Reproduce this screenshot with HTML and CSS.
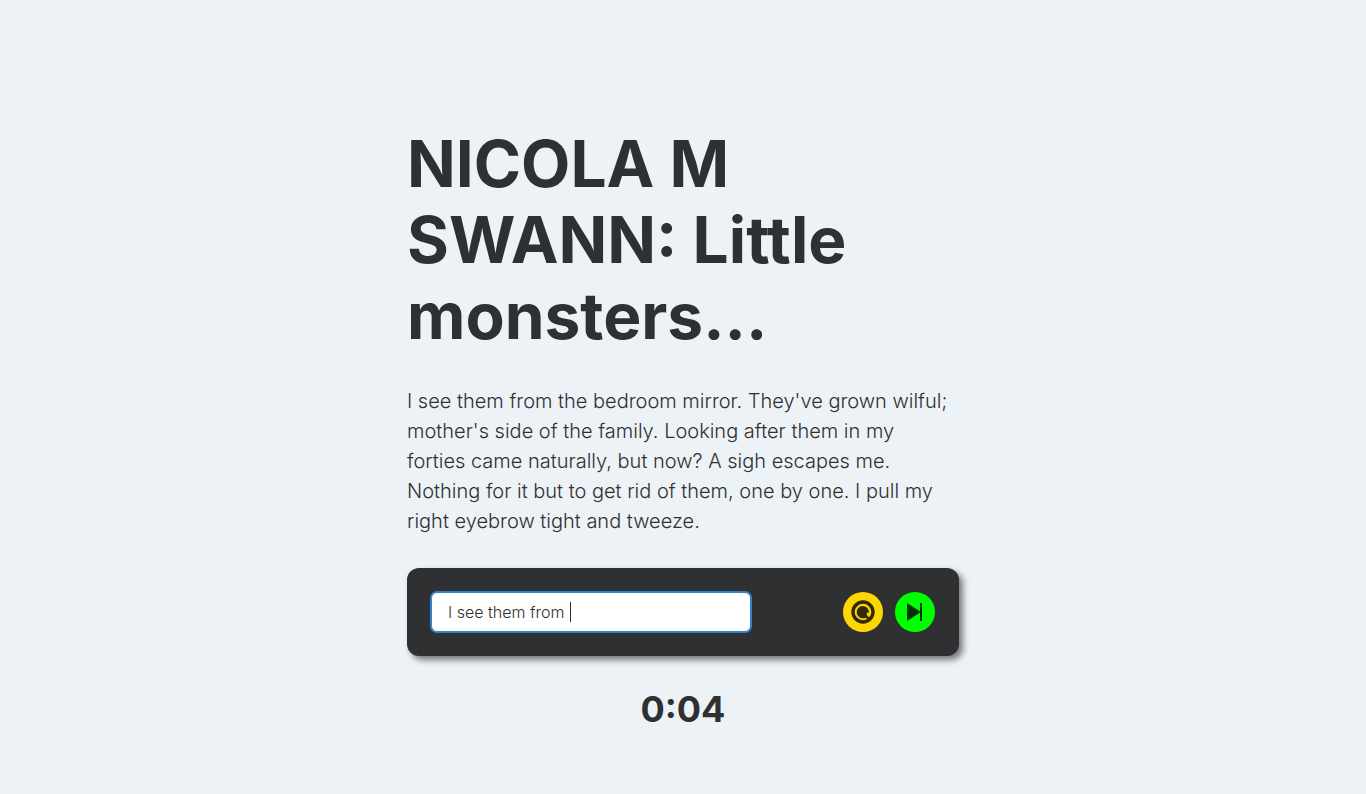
FILE: index.html
```html
<!DOCTYPE html>
<html lang="en">
<head>
<meta charset="utf-8">
<title>Typing practice</title>
<link rel="stylesheet" href="styles.css">
</head>
<body>
<main class="page">
  <h1 class="title">NICOLA M SWANN: Little monsters...</h1>
  <p class="passage">I see them from the bedroom mirror. They've grown wilful; mother's side of the family. Looking after them in my forties came naturally, but now? A sigh escapes me. Nothing for it but to get rid of them, one by one. I pull my right eyebrow tight and tweeze.</p>
  <form class="panel">
    <div class="field">
      <input class="entry" type="text" aria-label="Type the passage" autocomplete="off" spellcheck="false" value="I see them from " autofocus>
      <span class="caret" aria-hidden="true"></span>
    </div>
    <div class="actions">
      <button class="action restart" type="button" aria-label="Restart">
        <svg class="icon" viewBox="0 0 24 24" aria-hidden="true"><circle cx="12" cy="12" r="10" fill="none" stroke="currentColor" stroke-width="3.4"/><path d="M18 12.500A6.200 6.200 0 1 0 14.500 17.700L18.500 20.500 20 18.800 16.300 15.800 15.500 13z" fill="currentColor"/></svg>
      </button>
      <button class="action next" type="button" aria-label="Next passage">
        <svg class="icon" viewBox="0 0 24 24" aria-hidden="true"><path d="M4 3v18l14-9z" fill="currentColor"/><path d="M18 3v18" fill="none" stroke="currentColor" stroke-width="2"/></svg>
      </button>
    </div>
  </form>
  <time class="timer">0:04</time>
</main>
</body>
</html>
```
FILE: styles.css
```css
* { box-sizing: border-box; }

body {
  margin: 0;
  background: #edf2f7;
  color: #2e3032;
  font-family: Inter, "Liberation Sans", sans-serif;
}

.page {
  display: flex;
  flex-direction: column;
  justify-content: center;
  gap: 32px;
  max-width: 600px;
  min-height: 100vh;
  margin: 0 auto;
  padding: 62px 24px 0;
}

.title {
  margin: 0;
  font-size: 64px;
  font-weight: 700;
  line-height: 76px;
}

.passage {
  margin: 0;
  padding-right: 4px;
  font-size: 20px;
  font-weight: 300;
  line-height: 30px;
}

.panel {
  display: flex;
  align-items: center;
  justify-content: space-between;
  gap: 24px;
  padding: 24px;
  border-radius: 12px;
  background: #2e3032;
  box-shadow: 4px 4px 6px rgba(0, 0, 0, 0.5);
}

.field {
  position: relative;
  flex: 0 1 320px;
  min-width: 0;
}

.entry {
  display: block;
  width: 100%;
  height: 40px;
  padding: 0 16px;
  border: 1px solid #3182ce;
  border-radius: 6px;
  outline: none;
  box-shadow: 0 0 0 1px #3182ce;
  background: #fff;
  color: inherit;
  caret-color: transparent;
  font: inherit;
  font-size: 16px;
  font-weight: 300;
}

.caret {
  position: absolute;
  top: 10px;
  left: 139px;
  width: 1px;
  height: 20px;
  background: #2e3032;
}

.actions {
  display: flex;
  gap: 12px;
}

.action {
  display: flex;
  align-items: center;
  justify-content: center;
  width: 40px;
  height: 40px;
  padding: 0;
  border: 0;
  border-radius: 50%;
}

.restart { background: #ffd700; color: #332b00; }
.next { background: #00ff00; color: #003300; }

.icon {
  width: 24px;
  height: 24px;
}

.timer {
  align-self: center;
  font-size: 36px;
  font-weight: 700;
  line-height: 43px;
}
```
